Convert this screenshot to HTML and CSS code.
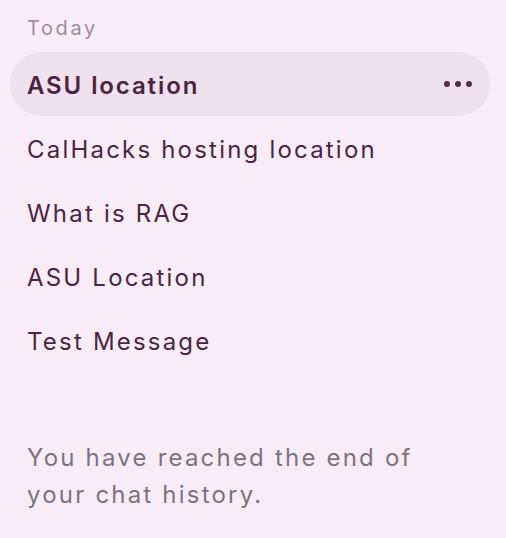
FILE: index.html
```html
<!DOCTYPE html>
<html lang="en">
<head>
    <meta charset="UTF-8">
    <meta name="viewport" content="width=device-width, initial-scale=1.0">
    <title>Chat history</title>
    <link rel="stylesheet" href="styles.css">
</head>
<body>
    <nav class="history">
        <!-- Group label -->
        <div class="group-label">Today</div>

        <ul class="chat-list">
            <li class="chat-item active">
                <span class="chat-title">ASU location</span>
                <button class="more" aria-label="More options">
                    <svg width="30" height="8" viewBox="0 0 30 8">
                        <circle cx="4" cy="4" r="3" fill="#552a4b"/>
                        <circle cx="15" cy="4" r="3" fill="#552a4b"/>
                        <circle cx="26" cy="4" r="3" fill="#552a4b"/>
                    </svg>
                </button>
            </li>
            <li class="chat-item"><span class="chat-title">CalHacks hosting location</span></li>
            <li class="chat-item"><span class="chat-title">What is RAG</span></li>
            <li class="chat-item"><span class="chat-title">ASU Location</span></li>
            <li class="chat-item"><span class="chat-title">Test Message</span></li>
        </ul>

        <p class="end-note">You have reached the end of your chat history.</p>
    </nav>
</body>
</html>
```

FILE: styles.css
```css
body {
    margin: 0;
    padding: 0;
    background-color: #f8edf7;
    font-family: Inter, "Noto Sans", sans-serif;
}
.history {
    padding: 14px 16px 0 10px;
}
.group-label {
    font-size: 20px;
    color: #a08b9c;
    padding-left: 17px;
    line-height: 28px;
    margin-bottom: 10px;
    letter-spacing: 2.6px;
}
.chat-list {
    list-style: none;
    margin: 0;
    padding: 0;
}
.chat-item {
    display: flex;
    align-items: center;
    justify-content: space-between;
    height: 64px;
    padding: 0 17px;
    border-radius: 32px;
    color: #4b2443;
    font-size: 24px;
    letter-spacing: 2.2px;
}
.chat-item.active {
    background-color: #f0e1ef;
    font-weight: 600;
    letter-spacing: 1.9px;
}
.chat-title {
    padding-top: 3px;
}
.more {
    border: none;
    background: none;
    padding: 0;
    display: flex;
}
.end-note {
    margin: 67px 0 0 17px;
    max-width: 400px;
    font-size: 24px;
    line-height: 37px;
    color: #7b7380;
    letter-spacing: 2.2px;
}
```
